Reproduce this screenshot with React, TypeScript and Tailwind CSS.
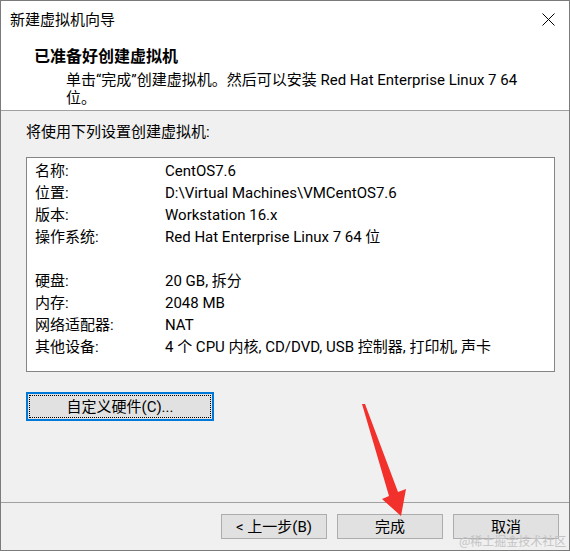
export default function App() {
  const rows: [string, string][] = [
    ["名称:", "CentOS7.6"],
    ["位置:", "D:\\Virtual Machines\\VMCentOS7.6"],
    ["版本:", "Workstation 16.x"],
    ["操作系统:", "Red Hat Enterprise Linux 7 64 位"],
    ["", ""],
    ["硬盘:", "20 GB, 拆分"],
    ["内存:", "2048 MB"],
    ["网络适配器:", "NAT"],
    ["其他设备:", "4 个 CPU 内核, CD/DVD, USB 控制器, 打印机, 声卡"],
  ];
  return (
    <div className="relative w-[570px] h-[551px] border border-[#7b7b7b] bg-[#f0f0f0] flex flex-col text-black text-[15px] font-[Roboto,'Noto_Sans_CJK_SC',sans-serif]">
      <div className="h-[110px] bg-white border-b border-[#a0a0a0] flex flex-col shrink-0">
        <div className="h-[37px] flex items-center justify-between pl-[9px] pr-[14px]">
          <span className="leading-[20px]">新建虚拟机向导</span>
          <svg width="13" height="13" viewBox="0 0 13 13">
            <path d="M0.5 0.5 L12.5 12.5 M12.5 0.5 L0.5 12.5" stroke="#000" strokeWidth="1" fill="none" />
          </svg>
        </div>
        <div className="pt-[9px] pl-[33px] font-bold text-[16px] leading-[20px]">已准备好创建虚拟机</div>
        <div className="mt-[4px] pl-[65px] leading-[18px] whitespace-nowrap">
          单击{"\u201c"}完成{"\u201d"}创建虚拟机。然后可以安装 Red Hat Enterprise Linux 7 64
          <br />
          位。
        </div>
      </div>
      <div className="flex-1 flex flex-col pl-[25px] pt-[11px]">
        <div className="leading-[20px]">将使用下列设置创建虚拟机:</div>
        <div className="mt-[15px] w-[529px] bg-white border border-[#858585] pt-[2px] pb-[13px] pl-[8px]">
          {rows.map(([k, v], i) => (
            <div key={i} className="grid grid-cols-[130px_1fr] h-[22px] leading-[22px] whitespace-nowrap">
              <span>{k}</span>
              <span>{v}</span>
            </div>
          ))}
        </div>
        <button className="relative mt-[20px] w-[188px] h-[29px] bg-[#e1e1e1] border-2 border-[#0078d7] flex items-center justify-center leading-[20px]">
          <span className="absolute inset-[1px] border border-dotted border-black" />
          <span>自定义硬件(C)...</span>
        </button>
      </div>
      <div className="h-[48px] shrink-0 border-t border-[#a0a0a0] pt-[11px] pr-[10px] flex justify-end gap-[10px]">
        {["< 上一步(B)", "完成", "取消"].map((t) => (
          <button key={t} className="w-[106px] h-[25px] bg-[#e1e1e1] border border-[#adadad] flex items-center justify-center leading-[20px]">
            {t}
          </button>
        ))}
      </div>
      <span className="absolute left-[458px] top-[531px] text-[12px] leading-[18px] text-[#c4c4c4] whitespace-nowrap font-['Noto_Sans_CJK_SC',sans-serif]">
        @稀土掘金技术社区
      </span>
      <svg className="absolute left-0 top-0 pointer-events-none" width="570" height="551" viewBox="0 0 570 551">
        <polygon
          points="361,403 364,403 397,491 405,488 400,515 381,498 388,495"
          fill="#f2302c"
        />
      </svg>
    </div>
  );
}
